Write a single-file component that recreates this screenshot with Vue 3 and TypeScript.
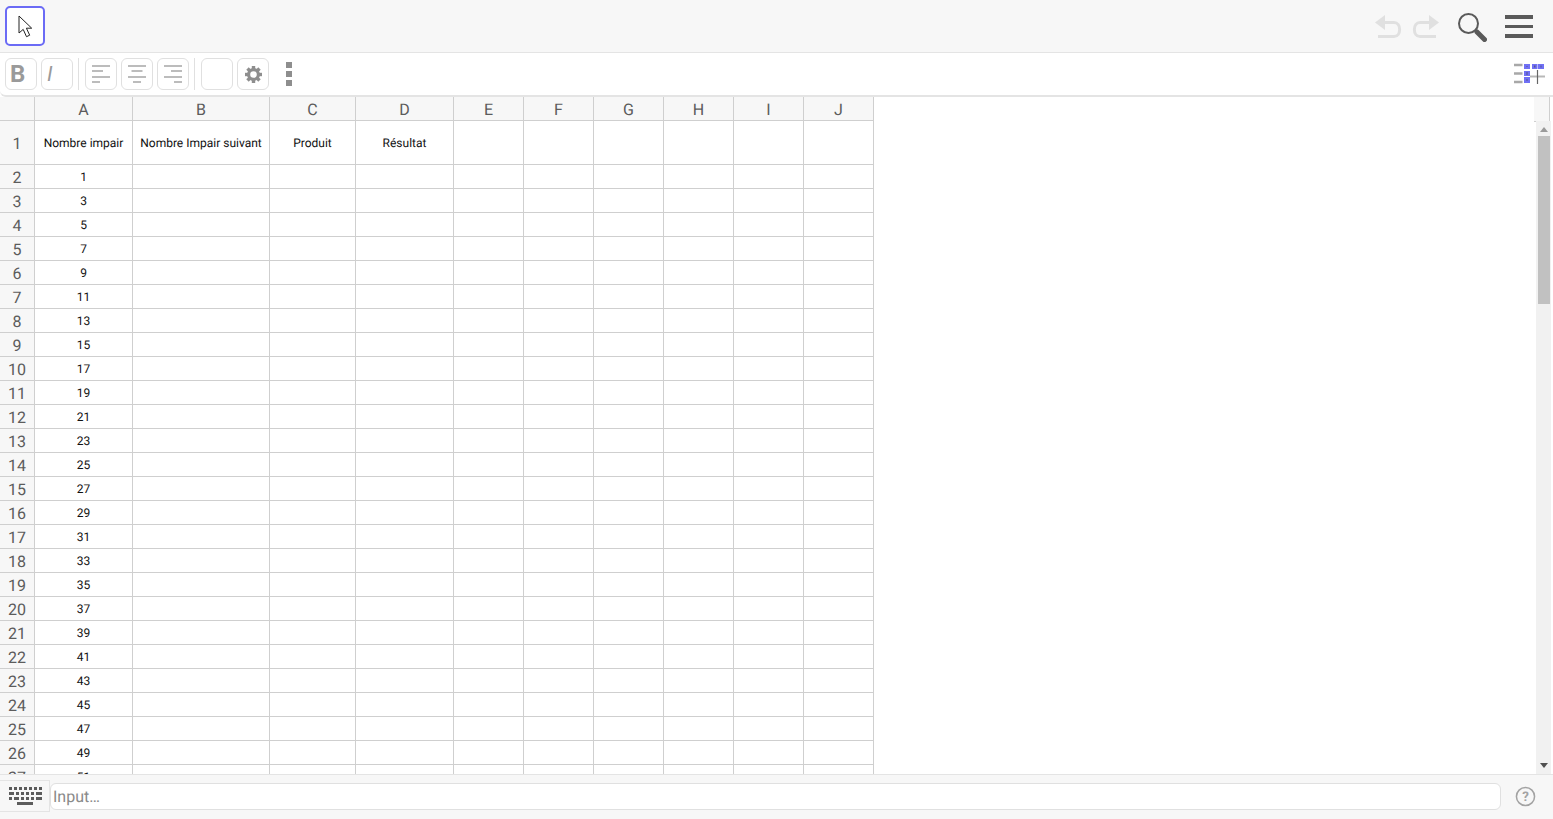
<template>
  <div class="app">
    <header class="topbar">
      <button class="mode-btn" aria-label="Move">
        <svg viewBox="0 0 16 24" width="16" height="24" aria-hidden="true">
          <path d="M2 2v17l4.200-3.600 3.300 7.300 3.200-1.500-3.300-7h5.300z" fill="#fff" stroke="#222" stroke-width="1" stroke-linejoin="round" />
        </svg>
      </button>
      <div class="topbar__right">
        <svg class="undo" viewBox="0 0 28 26" width="28" height="26" aria-hidden="true">
          <path d="M9 9.500h10c7.500 0 7.500 14 0 14H3" fill="none" stroke="#e0e0e0" stroke-width="3" />
          <path d="M0 9.500 10 2v15z" fill="#e0e0e0" />
        </svg>
        <svg class="redo" viewBox="0 0 28 26" width="28" height="26" aria-hidden="true">
          <path d="M19 9.500H9c-7.500 0-7.500 14 0 14h16" fill="none" stroke="#e0e0e0" stroke-width="3" />
          <path d="M28 9.500 18 2v15z" fill="#e0e0e0" />
        </svg>
        <svg class="search" viewBox="0 0 29 29" width="29" height="29" aria-hidden="true">
          <circle cx="10.500" cy="10.500" r="9.500" fill="none" stroke="#5a5a5a" stroke-width="2" />
          <path d="M19 19l7.500 7.500" stroke="#5a5a5a" stroke-width="5" stroke-linecap="round" />
        </svg>
        <div class="burger"><i /><i /><i /></div>
      </div>
    </header>

    <div class="stylebar">
      <button class="tool tool--text tool--bold">B</button>
      <button class="tool tool--text tool--italic">I</button>
      <span class="sep" />
      <button v-for="a in aligns" :key="a.name" class="tool" :aria-label="a.name">
        <svg viewBox="0 0 24 24" width="24" height="24" aria-hidden="true">
          <path v-for="(l, i) in a.lines" :key="i" :d="l" stroke="#a6a6a6" stroke-width="1.500" fill="none" />
        </svg>
      </button>
      <span class="sep" />
      <button class="tool" aria-label="Colour" />
      <button class="tool" aria-label="Settings">
        <svg viewBox="0 0 16 16" width="17" height="17" aria-hidden="true">
          <circle cx="8" cy="8" r="4.600" fill="none" stroke="#8e8e8e" stroke-width="3" />
          <rect
            v-for="t in gearTeeth"
            :key="t"
            x="6.400"
            y="0"
            width="3.200"
            height="3"
            fill="#8e8e8e"
            :transform="`rotate(${t} 8 8)`"
          />
        </svg>
      </button>
      <div class="dots"><i /><i /><i /></div>
      <svg class="view-toggle" viewBox="0 0 32 22" width="32" height="22" aria-hidden="true">
        <path d="M0 2h8.500M0 10.500h8.500M0 19h8.500" stroke="#a8a8a8" stroke-width="2.500" />
        <path d="M10 1h6v5h-6zM18 1h5.500v5H18zM24 1h6v5h-6zM10 8h6v5h-6zM10 14h6v6h-6z" fill="#7070f5" />
        <path d="M12.500 3h1v1h-1zM20 2.500h1.500v2H20zM26.500 2.500h1v2h-1zM12.500 9h1v3h-1zM12.500 16h1v2h-1z" fill="#55558a" />
        <path d="M16 13.500h15" stroke="#b8b8b8" stroke-width="2" />
        <path d="M23.500 7v14" stroke="#666" stroke-width="1.200" />
      </svg>
    </div>

    <main class="sheet">
      <div class="grid" :style="{ gridTemplateColumns: columnTemplate }">
        <div class="corner" />
        <div v-for="c in columns" :key="c.name" class="head">{{ c.name }}</div>
        <template v-for="r in rows" :key="r.index">
          <div class="row-head">{{ r.index }}</div>
          <div v-for="(c, i) in columns" :key="c.name" class="cell">{{ r.cells[i] }}</div>
        </template>
      </div>
      <div class="scroll-cap" />
      <div class="scrollbar">
        <span class="arrow arrow--up" />
        <div class="thumb" />
        <span class="arrow arrow--down" />
      </div>
    </main>

    <footer class="inputbar">
      <button class="kbd" aria-label="Keyboard">
        <svg viewBox="0 0 33 19" width="33" height="19" aria-hidden="true">
          <path fill="#5c5c5c" d="M0 0h3v3H0zM5 0h3v3H5zM10 0h3v3h-3zM15 0h3v3h-3zM20 0h3v3h-3zM25 0h3v3h-3zM30 0h3v3h-3zM0 5h5v3H0zM7 5h3v3H7zM12 5h3v3h-3zM17 5h3v3h-3zM22 5h3v3h-3zM27 5h6v3h-6zM0 10h3v3H0zM5 10h5v3H5zM12 10h3v3h-3zM17 10h3v3h-3zM22 10h3v3h-3zM27 10h6v3h-6zM8 15h16v3H8z" />
        </svg>
      </button>
      <div class="input-field">Input…</div>
      <svg class="help" viewBox="0 0 22 22" width="21" height="21" aria-hidden="true">
        <circle cx="11" cy="11" r="9.500" fill="none" stroke="#a3a3a3" stroke-width="1.600" />
        <text x="11" y="16" text-anchor="middle" class="help__mark">?</text>
      </svg>
    </footer>
  </div>
</template>

<script setup lang="ts">
import { computed } from 'vue'

const columns = [
  { name: 'A', width: 98 },
  { name: 'B', width: 137 },
  { name: 'C', width: 86 },
  { name: 'D', width: 98 },
  { name: 'E', width: 70 },
  { name: 'F', width: 70 },
  { name: 'G', width: 70 },
  { name: 'H', width: 70 },
  { name: 'I', width: 70 },
  { name: 'J', width: 70 },
]

const columnTemplate = computed(() => '35px ' + columns.map((c) => c.width + 'px').join(' '))

const titles = ['Nombre impair', 'Nombre Impair suivant', 'Produit', 'Résultat']

const rows = Array.from({ length: 27 }, (_, i) => {
  const index = i + 1
  const cells: string[] = index === 1 ? titles : [String(2 * index - 3)]
  return { index, cells }
})

const gearTeeth = [0, 45, 90, 135, 180, 225, 270, 315]

const aligns = [
  { name: 'Left', lines: ['M3 4h18', 'M3 9h11', 'M3 15h18', 'M3 20h8'] },
  { name: 'Center', lines: ['M3 4h18', 'M6.500 9h11', 'M3 15h18', 'M8 20h8'] },
  { name: 'Right', lines: ['M3 4h18', 'M10 9h11', 'M3 15h18', 'M13 20h8'] },
]
</script>

<style>
html,
body {
  margin: 0;
  overflow: hidden;
  background: #fff;
}
</style>

<style scoped>
.app {
  display: flex;
  flex-direction: column;
  width: 1553px;
  height: 819px;
  overflow: hidden;
  font-family: Roboto, "Liberation Sans", sans-serif;
  text-rendering: geometricPrecision;
  background: #fff;
}

.topbar {
  box-sizing: border-box;
  display: flex;
  align-items: center;
  justify-content: space-between;
  height: 53px;
  padding: 0 20px 0 5px;
  flex-shrink: 0;
  background: #f7f7f7;
  border-bottom: 1px solid #e4e4e4;
}

.mode-btn {
  display: flex;
  align-items: center;
  justify-content: center;
  box-sizing: border-box;
  width: 40px;
  height: 40px;
  padding: 0;
  border: 2px solid #6b6bf5;
  border-radius: 5px;
  background: #fff;
}

.topbar__right {
  display: flex;
  align-items: center;
}

.undo {
  margin-right: 8px;
}

.redo {
  margin-right: 19px;
}

.search {
  margin-right: 18px;
  margin-top: 2px;
}

.burger {
  display: flex;
  flex-direction: column;
  gap: 6px;
  width: 28px;
  margin-top: 1px;
}

.burger i {
  display: block;
  height: 3.500px;
  background: #5a5a5a;
}

.stylebar {
  box-sizing: border-box;
  display: flex;
  align-items: center;
  gap: 4px;
  height: 44px;
  flex-shrink: 0;
  padding: 0 7px 0 5px;
  background: #fff;
  border-bottom: 2px solid #e4e4e4;
  border-bottom-left-radius: 6px;
}

.tool {
  display: flex;
  align-items: center;
  justify-content: center;
  box-sizing: border-box;
  width: 32px;
  height: 32px;
  padding: 0;
  border: 1px solid #e0e0e0;
  border-radius: 6px;
  background: #fff;
}

.tool--text {
  justify-content: flex-start;
  color: #9a9a9a;
  font-family: Roboto, sans-serif;
}

.tool--bold {
  padding-left: 4px;
  font-size: 24px;
  font-weight: 700;
}

.tool--italic {
  padding-left: 5px;
  font-size: 21px;
  font-style: italic;
}

.sep {
  width: 1px;
  height: 32px;
  margin: 0 2px 0 1px;
  background: #e0e0e0;
}

.dots {
  display: flex;
  flex-direction: column;
  gap: 3px;
  margin-left: 13px;
}

.dots i {
  display: block;
  width: 6px;
  height: 6px;
  background: #8e8e8e;
}

.view-toggle {
  margin-left: auto;
}

.sheet {
  position: relative;
  flex: 1;
  min-height: 0;
  overflow: hidden;
}

.grid {
  display: grid;
  width: 874px;
  grid-template-rows: 24px 44px;
  grid-auto-rows: 24px;
  font-size: 12px;
  color: #111;
}

.corner,
.head,
.row-head {
  background: #f7f7f7;
  color: #5c5c5c;
}

.corner,
.head,
.row-head,
.cell {
  box-sizing: border-box;
  display: flex;
  align-items: center;
  justify-content: center;
  border-right: 1px solid #cfcfcf;
  border-bottom: 1px solid #cfcfcf;
}

.head,
.row-head {
  padding-top: 1px;
  font-size: 16px;
}

.scroll-cap {
  position: absolute;
  top: 0;
  right: 3px;
  width: 15px;
  height: 24px;
  background: #f7f7f7;
  border-right: 1px solid #cfcfcf;
  border-bottom: 1px solid #cfcfcf;
}

.scrollbar {
  position: absolute;
  top: 24px;
  right: 2px;
  bottom: 0;
  display: flex;
  flex-direction: column;
  align-items: center;
  width: 15px;
  background: #f1f1f1;
}

.thumb {
  width: 12px;
  height: 168px;
  margin-top: 4px;
  background: #c1c1c1;
}

.arrow {
  display: block;
  width: 0;
  height: 0;
  border-left: 4px solid transparent;
  border-right: 4px solid transparent;
}

.arrow--up {
  margin-top: 6px;
  border-bottom: 5px solid #9a9a9a;
}

.arrow--down {
  margin-top: auto;
  margin-bottom: 6px;
  border-top: 5px solid #505050;
}

.inputbar {
  box-sizing: border-box;
  display: flex;
  align-items: center;
  height: 45px;
  flex-shrink: 0;
  padding-bottom: 2px;
  background: #f7f7f7;
  border-top: 1px solid #e4e4e4;
}

.kbd {
  display: flex;
  align-items: center;
  justify-content: center;
  box-sizing: border-box;
  width: 50px;
  height: 32px;
  padding: 0 0 0 1px;
  border: 1px solid #e4e4e4;
  border-left: 0;
  background: #f7f7f7;
}

.input-field {
  box-sizing: border-box;
  display: flex;
  align-items: center;
  flex: 1;
  height: 27px;
  padding-left: 2px;
  border: 1px solid #e0e0e0;
  border-radius: 6px;
  background: #fff;
  color: #8a8a8a;
  font-size: 16px;
}

.help {
  margin: 0 17px 0 14px;
}

.help__mark {
  font-size: 14px;
  font-weight: 700;
  fill: #a3a3a3;
}
</style>
